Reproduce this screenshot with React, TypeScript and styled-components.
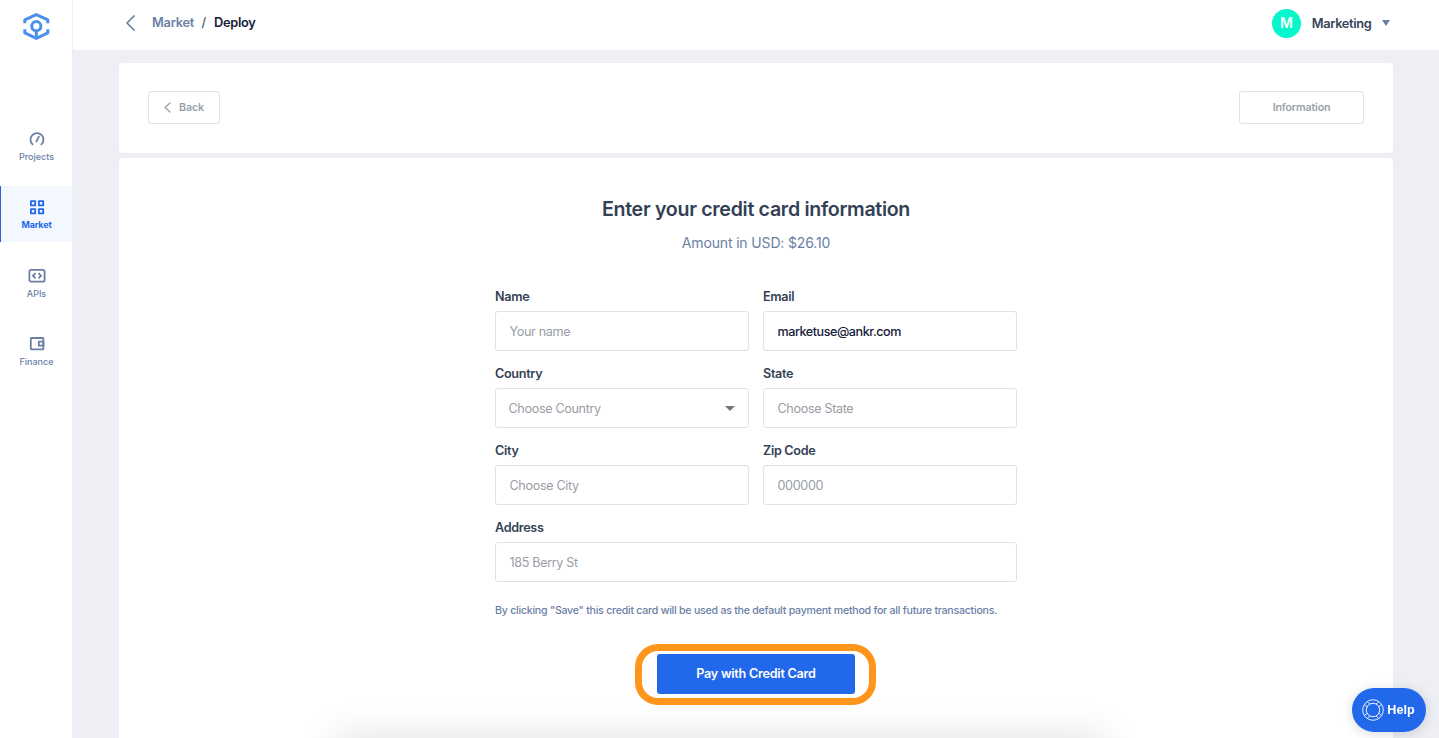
import React from 'react';
import styled, { createGlobalStyle, css } from 'styled-components';

const GlobalStyle = createGlobalStyle`
  *, *::before, *::after { box-sizing: border-box; }
  body {
    margin: 0;
    font-family: Inter, "Liberation Sans", sans-serif;
    background: #eeeff4;
    overflow: hidden;
  }
  button, input { font-family: inherit; }
`;

const Shell = styled.div`
  display: flex;
  height: 100vh;
  overflow: hidden;
`;

const Sidebar = styled.aside`
  flex: 0 0 73px;
  background: #fff;
  border-right: 1px solid #eeeff4;
  display: flex;
  flex-direction: column;
`;

const LogoLink = styled.a`
  display: flex;
  justify-content: center;
  padding-top: 12px;
  height: 118px;
`;

const Nav = styled.nav`
  display: flex;
  flex-direction: column;
  gap: 12.4px;
`;

const NavItem = styled.a<{ $active?: boolean }>`
  display: flex;
  flex-direction: column;
  align-items: center;
  height: 56px;
  padding: 12px 0 0 1px;
  gap: 3px;
  font-size: 9px;
  line-height: 11px;
  font-weight: 500;
  color: #6b7fa6;
  svg { display: block; }
  ${p => p.$active && css`
    color: #2568eb;
    font-weight: 700;
    letter-spacing: -0.15px;
    background: #f2f8fe;
    padding: 13px 0 0;
    gap: 2px;
    border-left: 1px solid #2c62cf;
  `}
`;

const Main = styled.div`
  flex: 1;
  display: flex;
  flex-direction: column;
  min-width: 0;
`;

const TopBar = styled.header`
  flex: 0 0 50px;
  background: #fff;
  display: flex;
  align-items: center;
  justify-content: space-between;
  padding: 0 49.5px 4px 53px;
`;

const Crumbs = styled.div`
  display: flex;
  align-items: center;
  font-size: 12.8px;
  font-weight: 600;
  letter-spacing: -0.25px;
  line-height: 18px;
  color: #6b7fa6;
  svg { margin-right: 17px; }
`;

const Slash = styled.span`
  color: #2f3b52;
  font-weight: 400;
  margin: 0 8px 0 7.5px;
`;

const Current = styled.span`
  color: #16203a;
`;

const Account = styled.div`
  display: flex;
  align-items: center;
  font-size: 12.8px;
  font-weight: 600;
  letter-spacing: -0.32px;
  color: #374259;
`;

const Avatar = styled.span`
  width: 29px;
  height: 29px;
  border-radius: 50%;
  background: #06f7cb;
  color: #fff;
  font-size: 14px;
  display: flex;
  align-items: center;
  justify-content: center;
  padding-bottom: 1px;
  margin-right: 11px;
`;

const Caret = styled.span<{ $size: number; $h: number; $color: string; $gap?: number }>`
  border-left: ${p => p.$size}px solid transparent;
  border-right: ${p => p.$size}px solid transparent;
  border-top: ${p => p.$h}px solid ${p => p.$color};
  margin-left: ${p => p.$gap || 0}px;
`;

const Content = styled.main`
  flex: 1;
  display: flex;
  flex-direction: column;
  gap: 5px;
  padding: 13px 46px 0;
  min-height: 0;
`;

const ActionsCard = styled.section`
  flex: 0 0 90px;
  background: #fff;
  border-radius: 3px;
  display: flex;
  justify-content: space-between;
  align-items: flex-start;
  padding: 28px 29px 0;
`;

const OutlineButton = styled.button<{ $width: number }>`
  width: ${p => p.$width}px;
  height: 33px;
  border: 1px solid #dfe1e8;
  border-radius: 3px;
  background: #fff;
  color: #9a9fab;
  font-size: 10.7px;
  font-weight: 600;
  letter-spacing: -0.18px;
  padding: 0;
  display: flex;
  align-items: center;
  justify-content: center;
  gap: 8px;
`;

const FormCard = styled.section`
  flex: 1;
  background: #fff;
  border-radius: 3px 3px 0 0;
  display: flex;
  flex-direction: column;
  align-items: center;
  padding-top: 38px;
  position: relative;
  overflow: hidden;
`;

const Title = styled.h1`
  margin: 0;
  font-size: 19.6px;
  line-height: 26px;
  font-weight: 600;
  letter-spacing: -0.31px;
  color: #343f55;
`;

const Amount = styled.p`
  margin: 11px 0 36px;
  font-size: 14px;
  line-height: 20px;
  letter-spacing: -0.15px;
  color: #6b7fa6;
`;

const Form = styled.form`
  width: 522px;
  display: grid;
  grid-template-columns: 1fr 1fr;
  gap: 15px 14px;
`;

const Field = styled.label<{ $wide?: boolean }>`
  display: flex;
  flex-direction: column;
  gap: 6px;
  font-size: 12.6px;
  line-height: 16px;
  font-weight: 600;
  letter-spacing: -0.3px;
  color: #343f55;
  grid-column: ${p => (p.$wide ? '1 / -1' : 'auto')};
`;

const boxStyle = css`
  width: 100%;
  height: 40px;
  border: 1px solid #dfe1e8;
  border-radius: 3px;
  background: #fff;
  font-size: 12.6px;
  font-weight: 400;
  letter-spacing: -0.34px;
`;

const Input = styled.input`
  ${boxStyle}
  padding: 0 13.5px;
  color: #16203a;
  font-weight: 500;
  outline: none;
  &[value] { letter-spacing: -0.46px; }
  &::placeholder { color: #999da6; font-weight: 400; opacity: 1; }
`;

const Select = styled.div`
  ${boxStyle}
  display: flex;
  align-items: center;
  justify-content: space-between;
  padding: 1px 13px 0 12.5px;
  color: #999da6;
`;

const Note = styled.p`
  width: 522px;
  margin: 22px 0 0;
  font-size: 10.6px;
  line-height: 14px;
  font-weight: 500;
  letter-spacing: -0.24px;
  white-space: nowrap;
  color: #6b7fa6;
`;

const Highlight = styled.div`
  margin: 26px 1px 0 0;
  width: 241px;
  height: 61px;
  border: 7px solid #ff961c;
  border-radius: 23px;
  padding: 3px 14px 0 15px;
  position: relative;
  z-index: 1;
`;

const PayButton = styled.button`
  display: block;
  width: 198px;
  height: 40px;
  border: 0;
  border-radius: 3px;
  background: #2268eb;
  color: #fff;
  font-size: 12.6px;
  font-weight: 600;
  letter-spacing: -0.24px;
  padding: 0 0 1px;
`;

const BottomShade = styled.div`
  position: absolute;
  left: 216px;
  width: 770px;
  top: 100%;
  height: 60px;
  box-shadow: 0 0 40px rgba(0, 0, 0, 0.13);
`;

const HelpButton = styled.button`
  position: fixed;
  right: 13px;
  bottom: 6px;
  width: 74px;
  height: 44px;
  border: 0;
  border-radius: 22px;
  background: #2268eb;
  color: #fff;
  font: 700 12.6px "Liberation Sans", Arial, sans-serif;
  display: flex;
  align-items: center;
  justify-content: center;
  gap: 3.5px;
  padding: 0 1.5px 0 0;
  box-shadow: 0 2px 12px rgba(20, 30, 60, 0.16);
`;

const Chevron = ({ w, h, stroke }: { w: number; h: number; stroke: number }) => (
  <svg width={w} height={h} viewBox={`0 0 ${w} ${h}`} fill="none" stroke="currentColor" strokeWidth={stroke} strokeLinecap="round" strokeLinejoin="round">
    <path d={`M${w - 1} 1L1 ${h / 2}L${w - 1} ${h - 1}`} />
  </svg>
);

const Logo = () => (
  <svg width="28" height="29" viewBox="0 0 28 29" fill="none" stroke="#4a90ea" strokeWidth="3">
    <path d="M2.8 11.2V7.9L14.3 2.6L25.8 7.9v3.3" strokeLinejoin="round" />
    <path d="M2.8 17.2V20.9L14.3 26.4L25.8 20.9V17.2" strokeLinejoin="round" />
    <circle cx="14.3" cy="14.2" r="4.6" />
    <path d="M14.3 19v7" />
  </svg>
);

const ProjectsIcon = () => (
  <svg width="18" height="18" viewBox="0 0 18 18" fill="none" stroke="currentColor" strokeWidth="1.8" strokeLinecap="round">
    <path d="M4.6 14.4A6.5 6.5 0 1 1 13.4 14.4" />
    <path d="M8.4 11.4L10.9 6.6" />
  </svg>
);

const MarketIcon = () => (
  <svg width="18" height="18" viewBox="0 0 18 18" fill="none" stroke="currentColor" strokeWidth="1.8" strokeLinejoin="round">
    <rect x="2.9" y="2.1" width="4.3" height="4.3" />
    <rect x="10.9" y="2.1" width="4.3" height="4.3" />
    <rect x="2.9" y="10.1" width="4.3" height="4.3" />
    <rect x="10.9" y="10.1" width="4.3" height="4.3" />
  </svg>
);

const ApiIcon = () => (
  <svg width="18" height="18" viewBox="0 0 18 18" fill="none" stroke="currentColor" strokeWidth="1.8">
    <rect x="1.4" y="2.9" width="15.2" height="11.8" rx="1.8" />
    <path d="M7.5 6.2L5 8.8L7.5 11.4M10.5 6.2L13 8.8L10.5 11.4" />
  </svg>
);

const FinanceIcon = () => (
  <svg width="18" height="18" viewBox="0 0 18 18" fill="none" stroke="currentColor" strokeWidth="1.8" strokeLinejoin="round">
    <rect x="2.8" y="3" width="12.6" height="11.4" rx="0.6" />
    <rect x="10.8" y="6.7" width="4.6" height="4" />
  </svg>
);

const LifeRing = () => (
  <svg width="22" height="22" viewBox="0 0 22 22" fill="none" stroke="#fff" strokeWidth="0.9">
    <circle cx="11" cy="11" r="10.3" />
    <circle cx="11" cy="11" r="6.7" />
    <path d="M2.6 5.7L5.5 8M5.4 2.8L8 5.2M19.4 5.7L16.5 8M16.6 2.8L14 5.2M2.6 16.3L5.5 14M5.4 19.2L8 16.8M19.4 16.3L16.5 14M16.6 19.2L14 16.8" />
  </svg>
);

export default function App() {
  return (
    <>
      <GlobalStyle />
      <Shell>
        <Sidebar>
          <LogoLink><Logo /></LogoLink>
          <Nav>
            <NavItem><ProjectsIcon />Projects</NavItem>
            <NavItem $active><MarketIcon />Market</NavItem>
            <NavItem><ApiIcon />APIs</NavItem>
            <NavItem><FinanceIcon />Finance</NavItem>
          </Nav>
        </Sidebar>
        <Main>
          <TopBar>
            <Crumbs>
              <Chevron w={9} h={16} stroke={1.7} />
              <span>Market</span><Slash>/</Slash><Current>Deploy</Current>
            </Crumbs>
            <Account>
              <Avatar>M</Avatar>
              <span>Marketing</span>
              <Caret $size={4} $h={6} $color="#6b7fa6" $gap={10} />
            </Account>
          </TopBar>
          <Content>
            <ActionsCard>
              <OutlineButton $width={72}><Chevron w={7} h={11} stroke={1.3} /><span>Back</span></OutlineButton>
              <OutlineButton $width={125}><span>Information</span></OutlineButton>
            </ActionsCard>
            <FormCard>
              <Title>Enter your credit card information</Title>
              <Amount>Amount in USD: $26.10</Amount>
              <Form>
                <Field>Name<Input placeholder="Your name" /></Field>
                <Field>Email<Input defaultValue="marketuse@ankr.com" /></Field>
                <Field>Country<Select>Choose Country<Caret $size={5} $h={5} $color="#757575" /></Select></Field>
                <Field>State<Input placeholder="Choose State" /></Field>
                <Field>City<Input placeholder="Choose City" /></Field>
                <Field>Zip Code<Input placeholder="000000" /></Field>
                <Field $wide>Address<Input placeholder="185 Berry St" /></Field>
              </Form>
              <Note>By clicking "Save" this credit card will be used as the default payment method for all future transactions.</Note>
              <Highlight><PayButton type="button">Pay with Credit Card</PayButton></Highlight>
              <BottomShade />
            </FormCard>
          </Content>
        </Main>
      </Shell>
      <HelpButton><LifeRing />Help</HelpButton>
    </>
  );
}
